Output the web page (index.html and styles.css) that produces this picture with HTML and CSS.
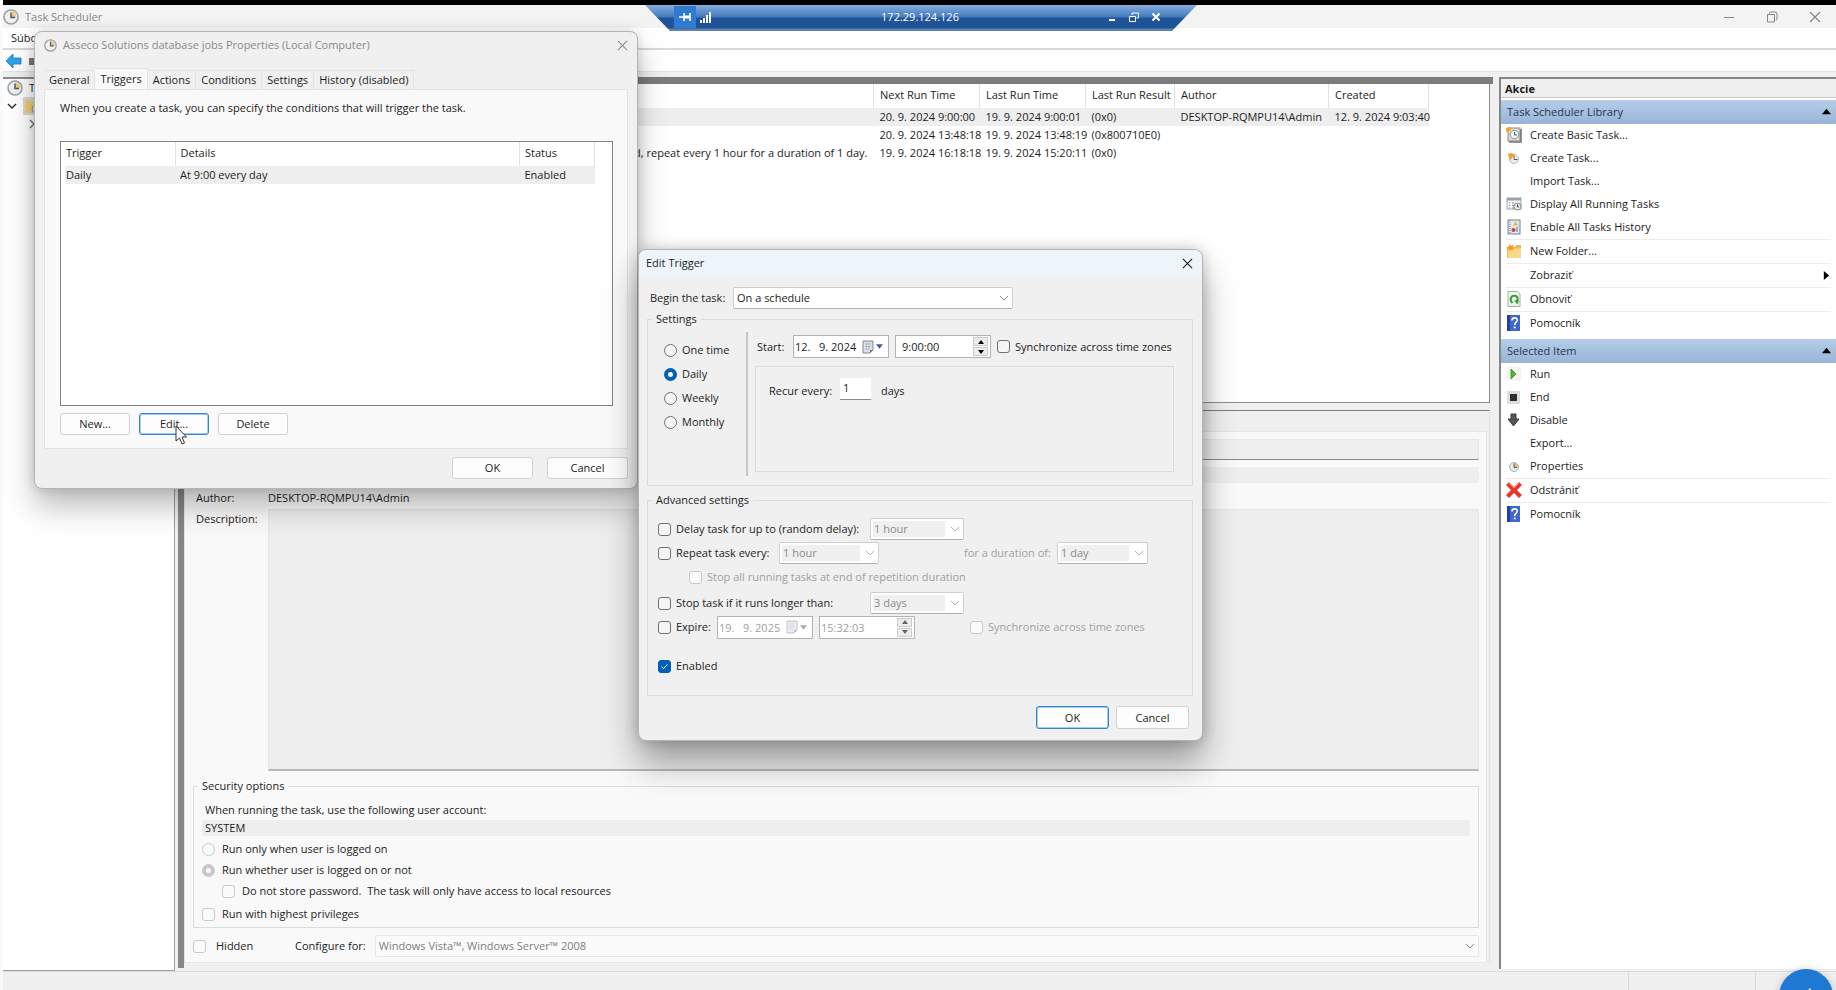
FILE: index.html
```
<!DOCTYPE html>
<html lang="sk">
<head>
    <meta charset="UTF-8">
    <meta name="viewport" content="width=device-width, initial-scale=1.0">
    <title>Task Scheduler</title>
    <link rel="stylesheet" href="styles.css">
</head>
<body>
    <!-- shared icons -->
    <svg class="sprite" aria-hidden="true">
        <symbol id="i-clock" viewBox="0 0 16 16">
            <circle cx="8" cy="8" r="7" fill="#eef2f5" stroke="#9aa0a5" stroke-width="1.6"/>
            <path d="M8 8V2.5A5.5 5.5 0 0 1 13.5 8z" fill="#f3c877"/>
            <path d="M8 3.5V8.5H12" fill="none" stroke="#4c5560" stroke-width="1.4"/>
        </symbol>
        <symbol id="i-close" viewBox="0 0 12 12">
            <path d="M1 1L11 11M11 1L1 11" fill="none" stroke="currentColor" stroke-width="1.2"/>
        </symbol>
        <symbol id="i-help" viewBox="0 0 16 16">
            <rect x="1" y="0" width="13" height="16" fill="#3f67cf"/>
            <rect x="1" y="0" width="3" height="16" fill="#23409a"/>
            <path d="M6 5.4C6 2 11.4 2.2 11.2 5.2C11.1 7.3 8.7 7.4 8.7 10" fill="none" stroke="#fff" stroke-width="1.6"/>
            <rect x="7.8" y="11.5" width="1.8" height="1.8" fill="#fff"/>
        </symbol>
        <symbol id="i-folder" viewBox="0 0 16 16">
            <path d="M1 4H9L10 2H15V15H1z" fill="#e5bb5c"/>
            <path d="M2 5.5H15V15H2z" fill="#f8d98c"/>
            <path d="M3.5 1L5 3L8 2L7 5L8.5 7L5.5 6.5L3.5 8.5L3 6L0 5L2.5 3.8z" fill="#f59a1b"/>
        </symbol>
        <symbol id="i-calendar" viewBox="0 0 12 14">
            <path d="M1 1H11V10L8 13H1z" fill="#dcdfe8" stroke="#84868c"/>
            <path d="M3 4H9M3 6.5H9M3 9H7M4.5 3V10M7 3V10" stroke="#b3b6c0" stroke-width=".8"/>
            <path d="M8 13V10H11z" fill="#77797f"/>
        </symbol>
    </svg>

    <div class="desktop">
        <div class="top-strip"></div>
        <main class="window">
            <header class="titlebar">
                <svg class="icon"><use href="#i-clock"/></svg>
                <span>Task Scheduler</span>
                <div class="window-buttons">
                    <button aria-label="Minimize"><svg viewBox="0 0 12 12"><path d="M1 6.5H11" stroke="currentColor"/></svg></button>
                    <button aria-label="Restore"><svg viewBox="0 0 12 12"><path d="M3.5 2.5V2Q3.5 1 4.5 1H9Q11 1 11 3V8Q11 9 10 9H9.5M1.5 3.5H8.5V11H1.5z" fill="none" stroke="currentColor"/></svg></button>
                    <button aria-label="Close"><svg><use href="#i-close"/></svg></button>
                </div>
            </header>
            <nav class="menubar"><span>Súbor</span></nav>
            <div class="toolbar">
                <svg class="icon" viewBox="0 0 16 16"><path d="M0 8L7 1V5H15V11H7V15z" fill="#2ea3ec" stroke="#1678bd" stroke-width=".8"/></svg>
                <svg class="icon" viewBox="0 0 16 16"><rect x="5" y="5" width="11" height="7" fill="#76797c"/></svg>
            </div>

            <div class="panes">
                <aside class="tree">
                    <div class="tree-row">
                        <svg class="icon"><use href="#i-clock"/></svg>
                        <span>Task</span>
                    </div>
                    <div class="tree-row">
                        <svg class="chevron" viewBox="0 0 10 10"><path d="M1 3L5 7L9 3" fill="none" stroke="#333" stroke-width="1.5"/></svg>
                        <span class="tree-selected"><svg class="icon" viewBox="0 0 16 16"><path d="M1 2H6L8 4H15V15H1z" fill="#f4cd78"/><circle cx="12" cy="11" r="4" fill="#d8dee2" stroke="#999"/></svg></span>
                    </div>
                    <div class="tree-row tree-child">
                        <svg class="chevron" viewBox="0 0 10 10"><path d="M3 1L7 5L3 9" fill="none" stroke="#777" stroke-width="1.5"/></svg>
                    </div>
                </aside>

                <section class="center">
                    <div class="task-list">
                        <table class="list">
                            <colgroup>
                                <col>
                                <col class="c-time">
                                <col class="c-time">
                                <col class="c-result">
                                <col class="c-author">
                                <col class="c-created">
                            </colgroup>
                            <tr>
                                <th></th>
                                <th>Next Run Time</th>
                                <th>Last Run Time</th>
                                <th>Last Run Result</th>
                                <th>Author</th>
                                <th>Created</th>
                            </tr>
                            <tr class="selected">
                                <td></td>
                                <td>20. 9. 2024 9:00:00</td>
                                <td>19. 9. 2024 9:00:01</td>
                                <td>(0x0)</td>
                                <td>DESKTOP-RQMPU14\Admin</td>
                                <td>12. 9. 2024 9:03:40</td>
                            </tr>
                            <tr>
                                <td></td>
                                <td>20. 9. 2024 13:48:18</td>
                                <td>19. 9. 2024 13:48:19</td>
                                <td>(0x800710E0)</td>
                                <td></td>
                                <td></td>
                            </tr>
                            <tr>
                                <td class="trigger-text">After triggered, repeat every 1 hour for a duration of 1 day.</td>
                                <td>19. 9. 2024 16:18:18</td>
                                <td>19. 9. 2024 15:20:11</td>
                                <td>(0x0)</td>
                                <td></td>
                                <td></td>
                            </tr>
                        </table>
                    </div>

                    <div class="details">
                        <form class="details-page">
                            <div class="field">
                                <input class="name-input" type="text" aria-label="Name" readonly>
                            </div>
                            <div class="field">
                                <input class="strip" type="text" aria-label="Location" readonly>
                            </div>
                            <div class="field">
                                <span class="field-label">Author:</span>
                                <span>DESKTOP-RQMPU14\Admin</span>
                            </div>
                            <div class="field field-grow">
                                <label class="field-label" for="description">Description:</label>
                                <textarea id="description" readonly></textarea>
                            </div>
                            <fieldset class="security">
                                <legend>Security options</legend>
                                <label for="account">When running the task, use the following user account:</label>
                                <input class="strip" id="account" type="text" value="SYSTEM" readonly>
                                <label class="check"><input type="radio" name="logon" disabled>Run only when user is logged on</label>
                                <label class="check"><input type="radio" name="logon" checked disabled>Run whether user is logged on or not</label>
                                <label class="check indent"><input type="checkbox" disabled>Do not store password.&nbsp; The task will only have access to local resources</label>
                                <label class="check last"><input type="checkbox" disabled>Run with highest privileges</label>
                            </fieldset>
                            <div class="configure">
                                <label class="check"><input type="checkbox" disabled>Hidden</label>
                                <label for="configure">Configure for:</label>
                                <select id="configure" disabled><option>Windows Vista™, Windows Server™ 2008</option></select>
                            </div>
                        </form>
                    </div>
                </section>

                <aside class="actions">
                    <h2>Akcie</h2>
                    <h3>Task Scheduler Library <svg viewBox="0 0 10 10"><path d="M0 8L5 2L10 8z"/></svg></h3>
                    <ul>
                        <li><button>
                            <svg class="icon" viewBox="0 0 16 16"><rect x="2" y="1" width="12" height="13" fill="#dedbd7" stroke="#8a8886"/><path d="M3 15H15V2" fill="none" stroke="#77736f" stroke-width="1.6"/><circle cx="8.5" cy="7.5" r="4.2" fill="#f4f8fa" stroke="#8696a0"/><path d="M8.5 5V8H11" fill="none" stroke="#555"/><path d="M0 1L3 0L6 1L5 3L3 4L2 6L0 4z" fill="#f5a62c"/></svg>
                            Create Basic Task...</button></li>
                        <li><button>
                            <svg class="icon" viewBox="0 0 16 16"><circle cx="8" cy="9" r="4.5" fill="#e6edf1" stroke="#b4c0c8"/><path d="M8 6V9.5H11.5" fill="none" stroke="#6b6048"/><path d="M2 4L5 3L8 4L9 6L6 7L5 10L3 8z" fill="#f5a020"/></svg>
                            Create Task...</button></li>
                        <li><button><span class="icon"></span>Import Task...</button></li>
                        <li><button>
                            <svg class="icon" viewBox="0 0 16 16"><rect x="1" y="2" width="14" height="11" fill="#f2f4f5" stroke="#a2a8ac"/><rect x="1" y="2" width="14" height="2.5" fill="#9aa3a9"/><path d="M3 7H4M6 7H8M3 9.5H4M6 9.5H8M3 12H4M6 12H8" stroke="#889"/><circle cx="11.5" cy="10.5" r="3.5" fill="#e8f0ee" stroke="#7d9188"/><path d="M11.5 8.5V11H13" fill="none" stroke="#444"/></svg>
                            Display All Running Tasks</button></li>
                        <li><button>
                            <svg class="icon" viewBox="0 0 16 16"><rect x="2" y="1" width="12" height="14" fill="#dfe9f6" stroke="#75818f"/><path d="M4 1V15" stroke="#75818f" stroke-dasharray="1 1"/><path d="M9.5 2L12 6.5H7z" fill="#f2bc35"/><circle cx="7.5" cy="11" r="2" fill="#d33d3d"/><path d="M11 8V13" stroke="#4a6fb3"/></svg>
                            Enable All Tasks History</button></li>
                        <li class="sep"><button><svg class="icon"><use href="#i-folder"/></svg>New Folder...</button></li>
                        <li class="sep"><button><span class="icon"></span>Zobraziť<svg class="submenu" viewBox="0 0 10 10"><path d="M2 0L8 5L2 10z"/></svg></button></li>
                        <li class="sep"><button>
                            <svg class="icon" viewBox="0 0 16 16"><path d="M2 .5H11.5L14 3V15.5H2z" fill="#eef3ee" stroke="#a5aea6"/><path d="M6.5 12C3 9 5 4.5 8.5 4.8C12 5 12.5 8.5 10.5 10.5" fill="none" stroke="#35a035" stroke-width="2"/><path d="M8 9.5L13 9.5L11.5 13.5z" fill="#35a035"/></svg>
                            Obnoviť</button></li>
                        <li class="sep"><button><svg class="icon"><use href="#i-help"/></svg>Pomocník</button></li>
                    </ul>
                    <h3>Selected Item <svg viewBox="0 0 10 10"><path d="M0 8L5 2L10 8z"/></svg></h3>
                    <ul>
                        <li><button><svg class="icon" viewBox="0 0 16 16"><rect x="1" y="1" width="14" height="14" fill="#f3f3f3"/><path d="M5 3L10 8L5 13z" fill="#4fb52e" stroke="#36911c" stroke-width=".8"/></svg>Run</button></li>
                        <li><button><svg class="icon" viewBox="0 0 16 16"><rect x="1" y="2" width="13" height="13" fill="#dedede"/><rect x="4" y="5" width="7" height="7" fill="#2e2e2e"/></svg>End</button></li>
                        <li><button><svg class="icon" viewBox="0 0 16 16"><path d="M5 2H10V7H13L7.5 14L2 7H5z" fill="#555" stroke="#3c3c3c"/></svg>Disable</button></li>
                        <li><button><span class="icon"></span>Export...</button></li>
                        <li><button><svg class="icon" viewBox="0 0 16 16"><circle cx="8" cy="9" r="4.5" fill="#e3ebef" stroke="#a4b3bd"/><path d="M8 9V5A4 4 0 0 1 12 9z" fill="#f1bd58"/><path d="M8 5.5V9.5H11" fill="none" stroke="#55606a"/></svg>Properties</button></li>
                        <li class="sep"><button><svg class="icon" viewBox="0 0 16 16"><path d="M3 0L8 5L13 0L16 3L11 8L16 13L13 16L8 11L3 16L0 13L5 8L0 3z" fill="#e8372c"/><path d="M3 1L8 6L13 1" fill="none" stroke="#f79086"/></svg>Odstrániť</button></li>
                        <li class="sep"><button><svg class="icon"><use href="#i-help"/></svg>Pomocník</button></li>
                    </ul>
                </aside>
            </div>

            <footer class="statusbar">
                <span></span>
                <span class="status-mid"></span>
                <span class="status-end"></span>
            </footer>
        </main>
    </div>

    <!-- remote connection bar -->
    <div class="rdp-bar">
        <button class="rdp-pin" aria-label="Pin"><svg viewBox="0 0 12 10"><path d="M0 5H5M5 1V9M11 1V9" fill="none" stroke="#fff" stroke-width="1.6"/><path d="M5 5H11" stroke="#fff" stroke-width="3"/></svg></button>
        <svg class="rdp-signal" viewBox="0 0 12 12"><path d="M1 12V9M4 12V7M7 12V4M10 12V1" stroke="#fff" stroke-width="2"/></svg>
        <span class="rdp-host">172.29.124.126</span>
        <button aria-label="Minimize"><svg viewBox="0 0 10 10"><path d="M2 8H8" stroke="#fff" stroke-width="2"/></svg></button>
        <button aria-label="Restore"><svg viewBox="0 0 10 10"><path d="M.5 4.5H6.5V9.5H.5zM3 3V1H9.5V6H7.5" fill="none" stroke="#fff"/></svg></button>
        <button aria-label="Close"><svg viewBox="0 0 10 10"><path d="M1.5 1.5L8.5 8.5M8.5 1.5L1.5 8.5" stroke="#fff" stroke-width="2"/></svg></button>
    </div>

    <!-- task properties -->
    <div class="dialog properties" role="dialog" aria-label="Properties">
        <header class="dialog-title">
            <svg class="icon"><use href="#i-clock"/></svg>
            <span>Asseco Solutions database jobs Properties (Local Computer)</span>
            <button class="dialog-close" aria-label="Close"><svg><use href="#i-close"/></svg></button>
        </header>
        <div class="tabs">
            <button>General</button>
            <button class="active">Triggers</button>
            <button>Actions</button>
            <button>Conditions</button>
            <button>Settings</button>
            <button>History (disabled)</button>
        </div>
        <div class="tab-page">
            <p>When you create a task, you can specify the conditions that will trigger the task.</p>
            <div class="trigger-list">
                <table class="list">
                    <colgroup>
                        <col class="c-trigger">
                        <col>
                        <col class="c-status">
                    </colgroup>
                    <tr>
                        <th>Trigger</th>
                        <th>Details</th>
                        <th>Status</th>
                    </tr>
                    <tr class="selected">
                        <td>Daily</td>
                        <td>At 9:00 every day</td>
                        <td>Enabled</td>
                    </tr>
                </table>
            </div>
            <div class="trigger-buttons">
                <button class="btn">New...</button>
                <button class="btn focus">Edit...
                    <svg class="cursor" viewBox="0 0 12 20"><path d="M1 1V16L4.5 13L7 19L9.5 18L7 12H11.5z" fill="#fff" stroke="#333"/></svg>
                </button>
                <button class="btn">Delete</button>
            </div>
        </div>
        <div class="dialog-buttons">
            <button class="btn">OK</button>
            <button class="btn">Cancel</button>
        </div>
    </div>

    <!-- edit trigger -->
    <form class="dialog edit-trigger" role="dialog" aria-label="Edit Trigger">
        <header class="dialog-title">
            <span>Edit Trigger</span>
            <button type="button" class="dialog-close" aria-label="Close"><svg><use href="#i-close"/></svg></button>
        </header>
        <div class="begin">
            <label for="begin">Begin the task:</label>
            <select id="begin"><option>On a schedule</option></select>
        </div>

        <fieldset class="settings">
            <legend>Settings</legend>
            <div class="frequency">
                <label class="check"><input type="radio" name="freq">One time</label>
                <label class="check"><input type="radio" name="freq" checked>Daily</label>
                <label class="check"><input type="radio" name="freq">Weekly</label>
                <label class="check"><input type="radio" name="freq">Monthly</label>
            </div>
            <div class="schedule">
                <div class="start">
                    <label for="start-date">Start:</label>
                    <span class="date-box">
                        <input id="start-date" type="text" value="12.   9. 2024">
                        <button type="button" aria-label="Choose date"><svg class="cal"><use href="#i-calendar"/></svg><svg class="drop" viewBox="0 0 8 5"><path d="M0 0H8L4 5z"/></svg></button>
                    </span>
                    <span class="time-box">
                        <input type="text" value="9:00:00" aria-label="Start time">
                        <span class="spin">
                            <button type="button" aria-label="Up"><svg viewBox="0 0 6 4"><path d="M0 4L3 0L6 4z"/></svg></button>
                            <button type="button" aria-label="Down"><svg viewBox="0 0 6 4"><path d="M0 0L3 4L6 0z"/></svg></button>
                        </span>
                    </span>
                    <label class="check"><input type="checkbox">Synchronize across time zones</label>
                </div>
                <div class="recur">
                    <label for="recur">Recur every:</label>
                    <input id="recur" type="text" value="1">
                    <span>days</span>
                </div>
            </div>
        </fieldset>

        <fieldset class="advanced">
            <legend>Advanced settings</legend>
            <div class="row">
                <label class="check wide"><input type="checkbox">Delay task for up to (random delay):</label>
                <select class="w-delay" aria-label="Delay" disabled><option>1 hour</option></select>
            </div>
            <div class="row">
                <label class="check repeat"><input type="checkbox">Repeat task every:</label>
                <select class="w-repeat" aria-label="Repeat every" disabled><option>1 hour</option></select>
                <label class="duration off" for="duration">for a duration of:</label>
                <select class="w-duration" id="duration" disabled><option>1 day</option></select>
            </div>
            <div class="row nested">
                <label class="check off"><input type="checkbox" disabled>Stop all running tasks at end of repetition duration</label>
            </div>
            <div class="row">
                <label class="check wide"><input type="checkbox">Stop task if it runs longer than:</label>
                <select class="w-delay" aria-label="Stop after" disabled><option>3 days</option></select>
            </div>
            <div class="row">
                <label class="check expire"><input type="checkbox">Expire:</label>
                <span class="date-box off">
                    <input type="text" value="19.   9. 2025" aria-label="Expire date" disabled>
                    <button type="button" aria-label="Choose date" disabled><svg class="cal"><use href="#i-calendar"/></svg><svg class="drop" viewBox="0 0 8 5"><path d="M0 0H8L4 5z"/></svg></button>
                </span>
                <span class="time-box off">
                    <input type="text" value="15:32:03" aria-label="Expire time" disabled>
                    <span class="spin">
                        <button type="button" aria-label="Up" disabled><svg viewBox="0 0 6 4"><path d="M0 4L3 0L6 4z"/></svg></button>
                        <button type="button" aria-label="Down" disabled><svg viewBox="0 0 6 4"><path d="M0 0L3 4L6 0z"/></svg></button>
                    </span>
                </span>
                <label class="check off sync"><input type="checkbox" disabled>Synchronize across time zones</label>
            </div>
            <div class="row enabled">
                <label class="check"><input type="checkbox" checked>Enabled</label>
            </div>
        </fieldset>

        <div class="dialog-buttons">
            <button type="button" class="btn focus">OK</button>
            <button type="button" class="btn">Cancel</button>
        </div>
    </form>

    <button class="chat" aria-label="Chat"><svg viewBox="0 0 24 24"><path d="M3 20L17 4L22 20" fill="none" stroke="#fff" stroke-width="3"/></svg></button>
</body>
</html>
```
FILE: styles.css
```
* {
    box-sizing: border-box;
}

body {
    margin: 0;
    overflow: hidden;
    font-family: "Open Sans", "Noto Sans", sans-serif;
    font-size: 11px;
    line-height: 16px;
    color: #1c1c1c;
    background-color: #fafafa;
}

button, input, select, textarea {
    font: inherit;
    color: inherit;
    margin: 0;
}

button {
    display: flex;
    align-items: center;
    justify-content: center;
    padding: 0;
    border: none;
    background: none;
}

svg {
    flex: none;
}

fieldset {
    margin: 0;
    min-width: 0;
    border: 1px solid #dcdcdc;
}

legend {
    padding: 0 4px;
}

h2, h3, p, ul {
    margin: 0;
    padding: 0;
    font-size: 11px;
}

.sprite {
    display: none;
}

.icon {
    width: 16px;
    height: 16px;
    flex: none;
}

/* main window */
.desktop {
    display: flex;
    flex-direction: column;
    height: 100vh;
    padding-left: 3px;
}

.top-strip {
    height: 5px;
    background-color: #000;
    flex: none;
}

.window {
    flex: 1;
    display: flex;
    flex-direction: column;
    min-height: 0;
    background-color: #f0f0f0;
}

.titlebar {
    display: flex;
    align-items: center;
    height: 23px;
    gap: 6px;
    color: #858585;
    background-color: #f3f3f3;
}

.window-buttons {
    display: flex;
    margin-left: auto;
    padding-right: 15px;
    gap: 31px;
}

.window-buttons svg {
    width: 12px;
    height: 12px;
}

.menubar {
    height: 22px;
    padding: 2px 8px;
    background-color: #fff;
    border-bottom: 2px solid #d8d8d8;
}

.toolbar {
    display: flex;
    align-items: center;
    gap: 2px;
    height: 22px;
    padding-left: 3px;
    background-color: #fff;
    border-bottom: 1px solid #e2e2e2;
}

.panes {
    flex: 1;
    display: flex;
    min-height: 0;
    margin-top: 5px;
}

.tree {
    width: 172px;
    background-color: #fff;
    border-top: 2px solid #8c8c8c;
    border-right: 1px solid #a0a0a0;
    border-bottom: 1px solid #a0a0a0;
    overflow: hidden;
    white-space: nowrap;
}

.tree-row {
    display: flex;
    align-items: center;
    gap: 6px;
    height: 18px;
    padding-left: 4px;
}

.tree-child {
    padding-left: 24px;
}

.tree-selected {
    display: flex;
    padding: 1px;
    background-color: #d9d9d9;
}

.chevron {
    width: 10px;
    height: 10px;
}

.center {
    flex: 1;
    display: flex;
    flex-direction: column;
    min-width: 0;
    margin: 0 6px 3px 3px;
    border-left: 6px solid #868686;
    border-top: 7px solid #7c7c7c;
}

.task-list {
    height: 319px;
    margin-right: 3px;
    padding-right: 60px;
    background-color: #fff;
    border-right: 1px solid #8c8c8c;
    border-bottom: 1px solid #8c8c8c;
}

.list {
    width: 100%;
    table-layout: fixed;
    border-collapse: collapse;
}

.list th, .list td {
    height: 18px;
    padding: 0 6px 1px;
    text-align: left;
    font-weight: normal;
    line-height: 16px;
    white-space: nowrap;
}

.list th {
    height: 24px;
    padding-bottom: 3px;
    border-right: 1px solid #e2e2e2;
}

.list .selected {
    background-color: #eeeeee;
}

.list .trigger-text {
    text-align: right;
}

.c-time {
    width: 106px;
}

.c-result {
    width: 89px;
}

.c-author {
    width: 154px;
}

.c-created {
    width: 100px;
}

.details {
    flex: 1;
    display: flex;
    margin: 7px 3px 5px 0;
    padding: 20px 2px 0 0;
    border-top: 1px solid #7c7c7c;
    border-right: 1px solid #e4e4e4;
}

.details-page {
    flex: 1;
    display: flex;
    flex-direction: column;
    padding: 7px 7px 5px 8px;
    background-color: #f9f9f9;
    border: 1px solid #e6e6e6;
}

.field {
    display: flex;
    margin-bottom: 7px;
}

.field-label {
    width: 75px;
    padding-left: 3px;
}

.name-input {
    width: 100%;
    height: 21px;
    background-color: #efefef;
    border: 1px solid #e6e6e6;
    border-bottom-color: #8a8a8a;
}

.strip {
    width: 100%;
    height: 16px;
    padding: 0 3px;
    background-color: #eeeeee;
    border: none;
}

.field-grow {
    flex: 1;
    margin: -4px 0 7px;
}

.field-grow .field-label {
    padding-top: 2px;
}

.field-grow textarea {
    flex: 1;
    resize: none;
    background-color: #eeeeee;
    border: 1px solid #e6e6e6;
    border-bottom: 2px solid #b8b8b8;
}

.security {
    display: flex;
    flex-direction: column;
    padding: 8px 8px 5px;
}

.security legend {
    margin-left: -4px;
}

.security > label:first-of-type {
    padding-left: 3px;
    margin-bottom: 2px;
}

.security .check {
    margin-top: 5px;
}

.security .indent {
    padding-left: 20px;
}

.security .last {
    margin-top: 7px;
}

.configure {
    display: flex;
    align-items: center;
    margin-top: 7px;
}

.configure .check {
    width: 102px;
    gap: 10px;
}

.configure select {
    flex: 1;
    margin-left: 9px;
    color: #7d7d7d;
    background-color: #fbfbfb;
    border: 1px solid #e8e8e8;
}

/* form controls */
.check {
    display: flex;
    align-items: center;
    gap: 7px;
}

input[type="checkbox"], input[type="radio"] {
    appearance: none;
    width: 13px;
    height: 13px;
    flex: none;
    background-color: #f5f5f5;
    border: 1px solid #707070;
    border-radius: 3px;
}

input[type="radio"] {
    border-radius: 50%;
}

input[type="radio"]:checked {
    background-color: #fff;
    border: 4px solid #005fb8;
}

input[type="checkbox"]:checked {
    border-color: #005fb8;
    background: #005fb8 url("data:image/svg+xml,%3Csvg xmlns='http://www.w3.org/2000/svg' viewBox='0 0 11 11'%3E%3Cpath d='M2.5 5.5L4.5 7.5L8.5 3.5' fill='none' stroke='%23fff'/%3E%3C/svg%3E") center / 11px no-repeat;
}

input[type="checkbox"]:disabled, input[type="radio"]:disabled {
    border-color: #c8c8c8;
    background-color: #fbfbfb;
}

select {
    appearance: none;
    height: 22px;
    padding: 0 3px;
    color: inherit;
    opacity: 1;
    background: #fff url("data:image/svg+xml,%3Csvg xmlns='http://www.w3.org/2000/svg' viewBox='0 0 8 8'%3E%3Cpath d='M0 2L4 6L8 2' fill='none' stroke='%23888'/%3E%3C/svg%3E") right 4px center / 8px no-repeat;
    border: 1px solid #cfcfcf;
    border-bottom-color: #b0b0b0;
    border-radius: 2px;
}

.btn {
    position: relative;
    height: 22px;
    background-color: #fdfdfd;
    border: 1px solid #d2d2d2;
    border-radius: 3px;
}

.btn.focus {
    border: 1px solid #2f87c8;
    box-shadow: 0 0 0 1px #a5cdea inset;
}

.off {
    color: #a0a0a0;
}

/* actions pane */
.actions {
    width: 337px;
    margin-bottom: 2px;
    background-color: #fff;
    border-left: 2px solid #858585;
    border-top: 2px solid #858585;
}

.actions h2 {
    height: 19px;
    padding: 2px 4px;
    background-color: #efefef;
    border-bottom: 1px solid #c8c8c8;
}

.actions h3 {
    display: flex;
    align-items: center;
    justify-content: space-between;
    height: 24px;
    margin-top: 2px;
    padding: 0 5px 1px 6px;
    font-weight: normal;
    color: #24364c;
    background: linear-gradient(#b5cde9, #98b4d7);
}

.actions h3 svg, .submenu {
    width: 9px;
    height: 9px;
    fill: #000;
}

.actions ul {
    list-style: none;
    padding: 0 5px;
}

.actions ul + h3 {
    margin-top: 4px;
}

.actions li {
    height: 23px;
}

.actions li.sep {
    height: 24px;
    border-top: 1px solid #ebebeb;
}

.actions li button {
    width: 100%;
    height: 22px;
    justify-content: flex-start;
    gap: 8px;
}

.submenu {
    margin-left: auto;
}

.statusbar {
    display: flex;
    height: 19px;
    border-top: 1px solid #dcdcdc;
}

.statusbar span {
    flex: 1;
    border-right: 1px solid #dadada;
}

.statusbar .status-mid {
    flex: none;
    width: 127px;
}

.statusbar .status-end {
    flex: none;
    width: 80px;
    border: none;
}

/* connection bar */
.rdp-bar {
    position: absolute;
    top: 5px;
    left: 50%;
    width: 552px;
    height: 26px;
    margin-left: -273px;
    padding: 0 30px 3px 29px;
    display: flex;
    align-items: center;
    color: #fff;
    background: linear-gradient(#86aedf 0, #4279bd 12px, #1f5499 13px, #1f5499 23px, #5d81b0 24px, #5d81b0 26px);
    clip-path: polygon(0 0, 100% 0, 527px 100%, 25px 100%);
}

.rdp-bar button {
    width: 22px;
    height: 22px;
}

.rdp-bar button svg {
    width: 10px;
    height: 10px;
}

.rdp-bar .rdp-pin {
    background-color: #2f7bd0;
}

.rdp-bar .rdp-pin svg {
    width: 12px;
}

.rdp-signal {
    width: 12px;
    height: 12px;
    margin-left: 4px;
}

.rdp-host {
    flex: 1;
    padding-left: 27px;
    text-align: center;
}

/* dialogs */
.dialog {
    position: absolute;
    background-color: #f0f0f0;
    border: 1px solid #b4b4b4;
    border-radius: 8px;
}

.dialog-title {
    display: flex;
    align-items: center;
    gap: 6px;
    border-radius: 8px 8px 0 0;
}

.dialog-close {
    margin-left: auto;
}

.dialog-close svg {
    width: 11px;
    height: 11px;
}

.dialog-buttons {
    display: flex;
    justify-content: flex-end;
}

.properties {
    top: 31px;
    left: 34px;
    width: 604px;
    padding: 0 9px 9px;
    box-shadow: 0 18px 30px rgba(0, 0, 0, 0.26), 0 0 12px rgba(0, 0, 0, 0.15);
}

.properties .dialog-title {
    height: 26px;
    color: #8a8a8a;
}

.properties .dialog-title .icon {
    width: 13px;
    height: 13px;
}

.tabs {
    display: flex;
    align-items: flex-end;
    height: 31px;
}

.tabs button {
    height: 19px;
    padding: 0 5px;
    border: 1px solid #e4e4e4;
    border-width: 1px 1px 0 0;
}

.tabs .active {
    height: 21px;
    padding-bottom: 1px;
    background-color: #f9f9f9;
}

.tab-page {
    padding: 10px 14px 13px 15px;
    background-color: #f9f9f9;
    border: 1px solid #e4e4e4;
}

.trigger-list {
    height: 265px;
    margin-top: 25px;
    padding: 0 17px 0 4px;
    background-color: #fff;
    border: 1px solid #828282;
}

.trigger-list .list th,
.trigger-list .list td {
    padding-left: 5px;
}

.trigger-list .list th:first-child,
.trigger-list .list td:first-child {
    padding-left: 1px;
}

.c-trigger {
    width: 110px;
}

.c-status {
    width: 75px;
}

.trigger-buttons {
    display: flex;
    gap: 9px;
    margin-top: 7px;
}

.trigger-buttons .btn {
    width: 70px;
}

.cursor {
    position: absolute;
    top: 11px;
    left: 35px;
    width: 12px;
    height: 20px;
}

.properties .dialog-buttons {
    gap: 14px;
    margin-top: 8px;
}

.properties .dialog-buttons .btn {
    width: 81px;
}

.edit-trigger {
    top: 249px;
    left: 638px;
    width: 565px;
    padding: 0 9px 11px 8px;
    box-shadow: 0 22px 34px rgba(0, 0, 0, 0.34), 0 0 14px rgba(0, 0, 0, 0.2);
}

.edit-trigger .dialog-title {
    height: 29px;
    margin: 0 -9px 8px -8px;
    padding: 0 9px 3px 7px;
    background-color: #edf4fb;
}

.begin {
    display: flex;
    align-items: center;
    padding-left: 3px;
}

.begin label {
    width: 83px;
}

.begin select {
    width: 280px;
}

.settings {
    display: flex;
    margin-top: 2px;
    padding: 5px 18px 9px 16px;
}

.settings legend {
    margin-left: -12px;
}

.advanced legend {
    margin-left: -6px;
}

.frequency {
    display: flex;
    flex-direction: column;
    gap: 8px;
    width: 84px;
    padding-top: 10px;
    border-right: 2px solid #c6c6c6;
}

.frequency .check {
    gap: 5px;
}

.schedule {
    flex: 1;
    padding: 3px 0 4px 7px;
}

.start {
    display: flex;
    align-items: center;
    gap: 6px;
    padding-left: 2px;
    white-space: nowrap;
}

.start > label:first-child {
    width: 30px;
}

.start .check {
    gap: 5px;
}

.recur {
    display: flex;
    align-items: flex-start;
    height: 106px;
    margin-top: 8px;
    padding: 11px 13px;
    border: 1px solid #dcdcdc;
}

.recur label {
    width: 71px;
    padding-top: 5px;
}

.recur input {
    width: 31px;
    height: 22px;
    padding: 0 3px 2px;
    background-color: #fff;
    border: none;
    border-bottom: 1px solid #8c8c8c;
}

.recur span {
    padding: 5px 0 0 10px;
}

.date-box, .time-box {
    display: flex;
    align-items: center;
    width: 96px;
    height: 23px;
    background-color: #fff;
    border: 1px solid #b2b2b2;
}

.date-box input, .time-box input {
    flex: 1;
    width: 0;
    height: 18px;
    padding: 0 1px;
    background: none;
    border: none;
}

.time-box:not(.off) input {
    padding-left: 6px;
}

.date-box button {
    gap: 2px;
    padding-right: 5px;
}

.cal {
    width: 12px;
    height: 14px;
}

.drop {
    width: 7px;
    height: 5px;
    fill: #3f5f96;
}

.off .cal {
    opacity: 0.5;
}

.off .drop {
    fill: #aaa;
}

.spin {
    display: flex;
    flex-direction: column;
    gap: 1px;
    padding-right: 2px;
}

.spin button {
    width: 15px;
    height: 9px;
    background-color: #ececec;
    border: 1px solid #cccccc;
}

.spin svg {
    width: 6px;
    height: 4px;
}

.off .spin svg {
    fill: #666;
}

.advanced {
    margin-top: 6px;
    padding: 9px 10px 17px;
}

.row {
    display: flex;
    align-items: center;
    height: 24px;
}

.row .check {
    gap: 5px;
}

.advanced select:disabled {
    color: #8a8a8a;
    background:
        url("data:image/svg+xml,%3Csvg xmlns='http://www.w3.org/2000/svg' viewBox='0 0 8 8'%3E%3Cpath d='M0 2L4 6L8 2' fill='none' stroke='%23b5b5b5'/%3E%3C/svg%3E") right 4px center / 8px no-repeat,
        linear-gradient(#f0f0f0, #f0f0f0) 2px 2px / calc(100% - 20px) 16px no-repeat,
        #fff;
}

.nested {
    height: 26px;
    padding: 0 0 2px 31px;
}

.wide {
    width: 212px;
}

.repeat {
    width: 121px;
}

.expire {
    width: 59px;
}

.w-delay {
    width: 94px;
}

.w-repeat {
    width: 100px;
}

.w-duration {
    width: 91px;
}

.duration {
    width: 93px;
    margin-left: 85px;
}

.row .time-box {
    margin-left: 6px;
}

.sync {
    margin-left: 55px;
}

.enabled {
    margin-top: 15px;
}

.edit-trigger .dialog-buttons {
    gap: 7px;
    margin-top: 10px;
    padding-right: 4px;
}

.edit-trigger .dialog-buttons .btn {
    width: 73px;
    height: 23px;
}

.chat {
    position: absolute;
    right: 3px;
    bottom: -33px;
    width: 54px;
    height: 54px;
    border-radius: 50%;
    background-color: #1f78d1;
    box-shadow: 0 2px 10px rgba(0, 0, 0, 0.25);
}

.chat svg {
    width: 18px;
    height: 18px;
}
```
